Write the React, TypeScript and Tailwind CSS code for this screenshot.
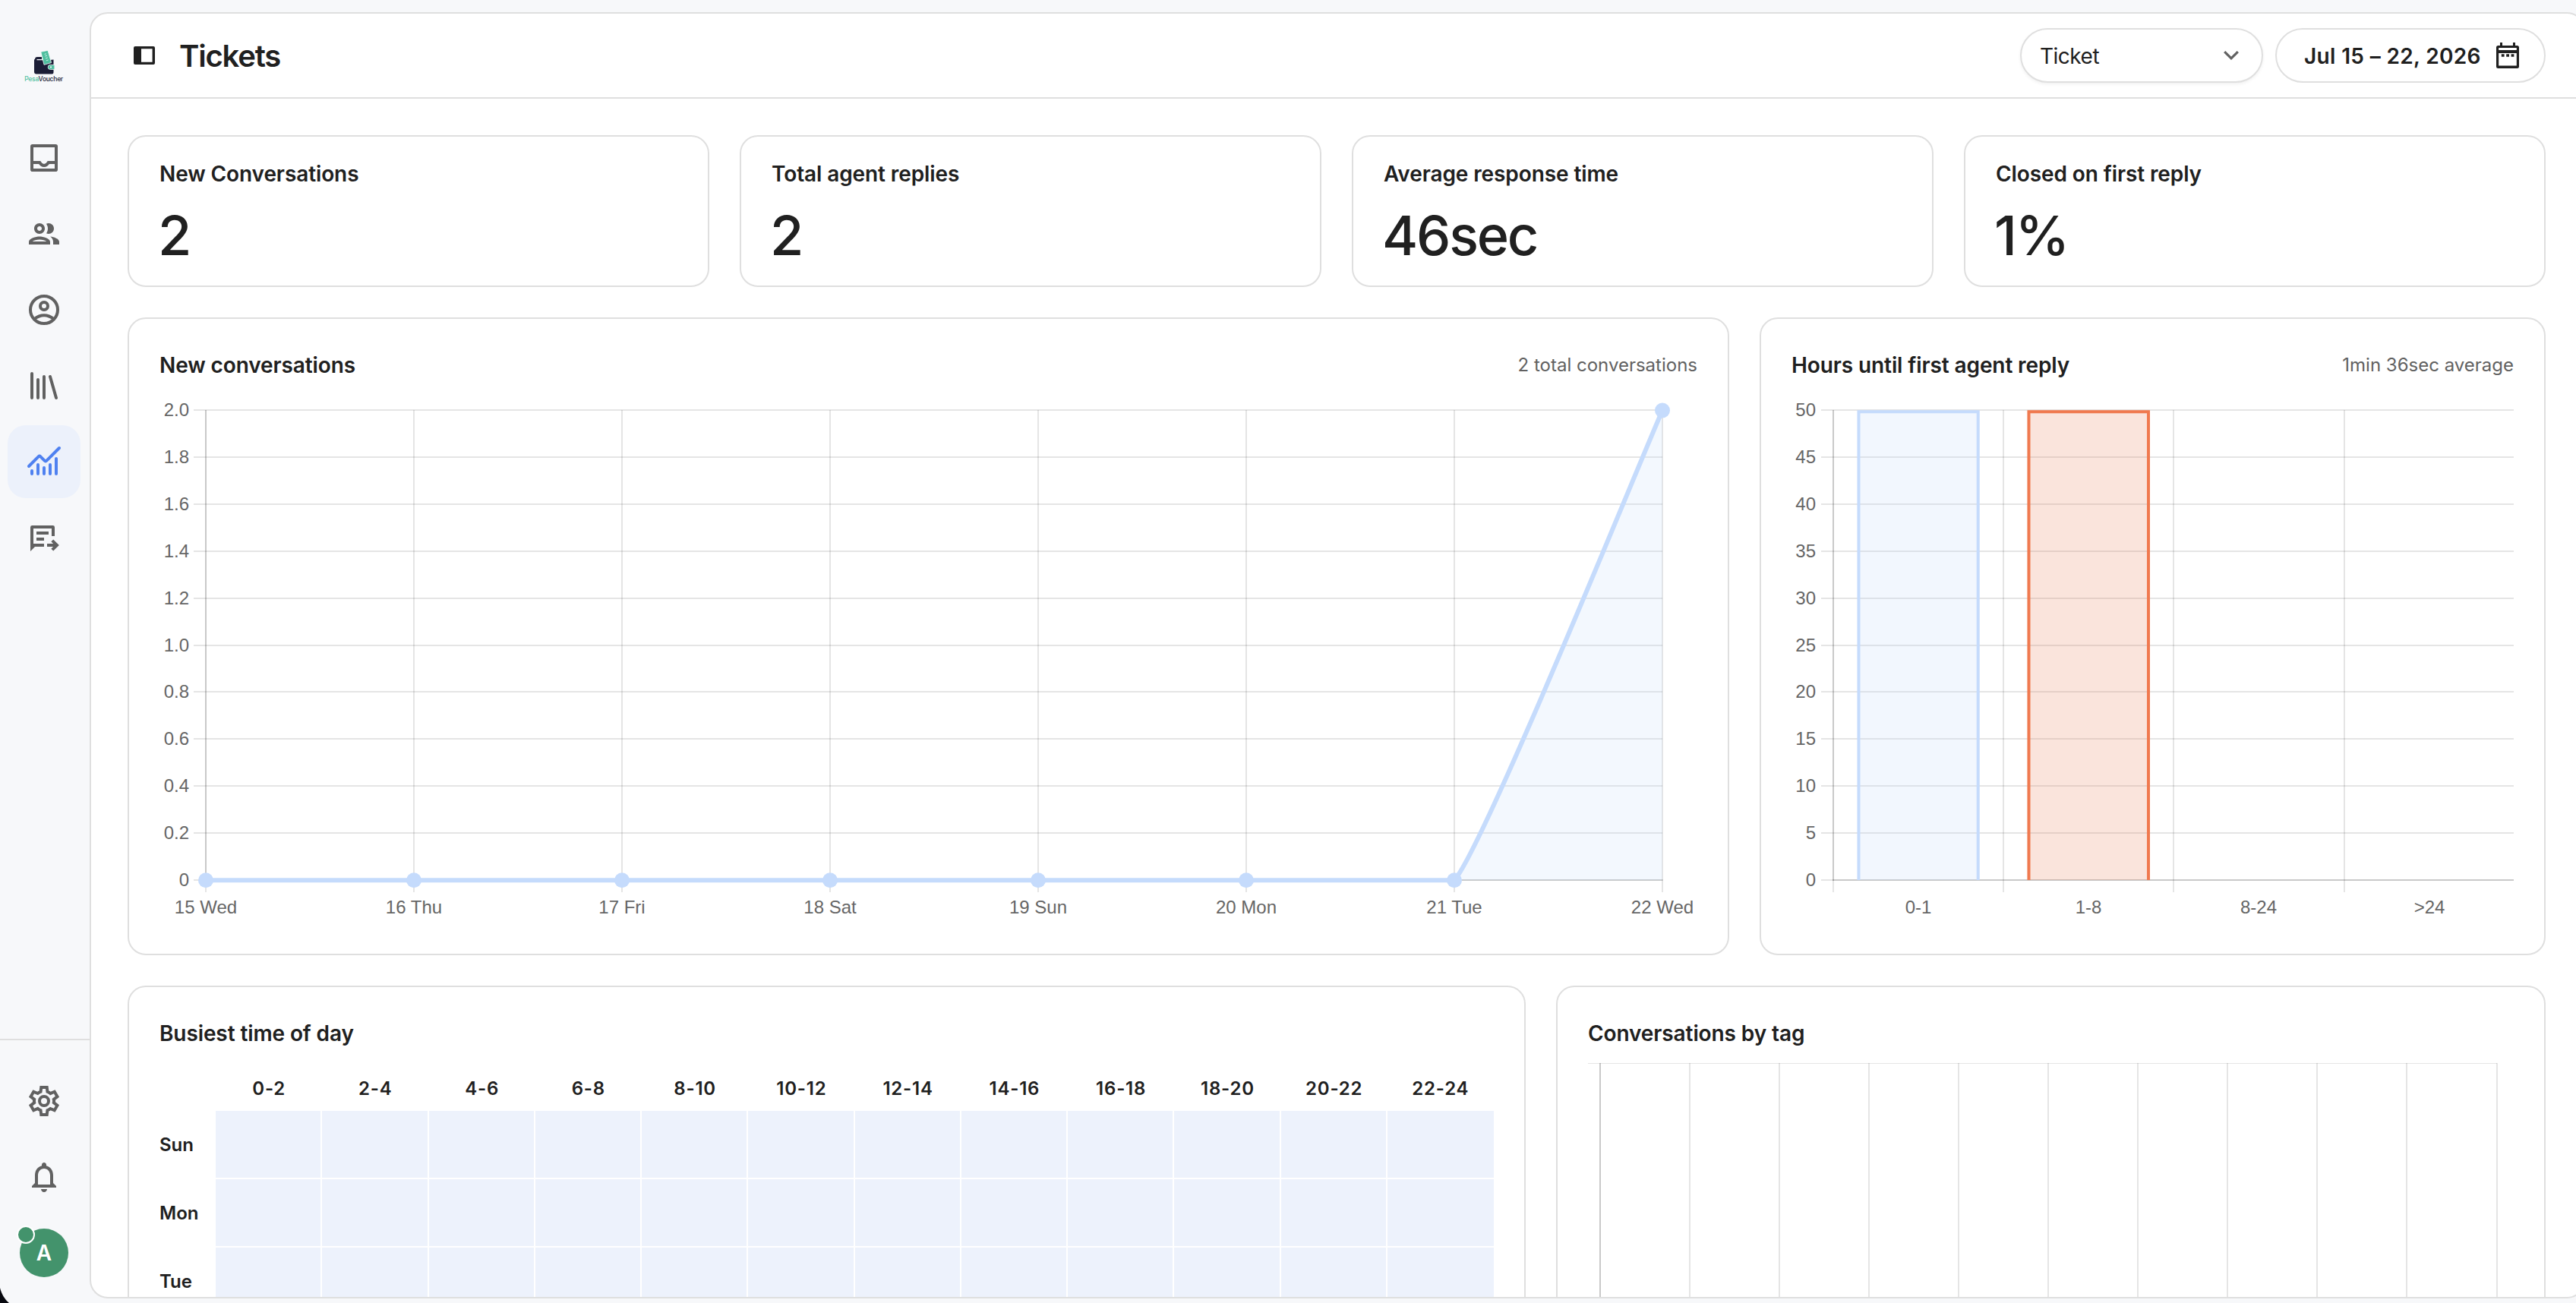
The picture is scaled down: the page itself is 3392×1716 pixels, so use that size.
import React from "react";

const INK = "#202020";
const GRID = "rgba(0,0,0,0.1)";
const AXIS = "rgba(0,0,0,0.12)";
const LABEL = "#666666";

const gridY = [540, 602, 664, 726, 788, 850, 911, 973, 1035, 1097, 1159];

function Icon({ children, className = "" }: { children: React.ReactNode; className?: string }) {
  return (
    <svg
      viewBox="0 0 24 24"
      className={`size-12 ${className}`}
      fill="none"
      stroke="currentColor"
      strokeWidth={2}
    >
      {children}
    </svg>
  );
}

function NavButton({ active = false, children }: { active?: boolean; children: React.ReactNode }) {
  return (
    <button
      className={
        active
          ? "flex size-24 items-center justify-center rounded-3xl bg-[#ecf1fb] text-[#4f81f0]"
          : "flex size-24 items-center justify-center rounded-3xl text-[#616161]"
      }
    >
      {children}
    </button>
  );
}

function Logo() {
  return (
    <svg viewBox="0 0 60 48" className="h-12 w-[60px]">
      <path
        d="M18 14.2Q18 11 21.2 11H27V14H20.5V15.2H36L42.5 14.5V31.5Q42.5 33.5 40.5 33.5H20Q17 33.5 17 30.5V14.2Z"
        fill="#1b1d36"
      />
      <path d="M25.8 4.3L35 2.4L39.6 18.6L30 21.3Z" fill="#4fbf9f" stroke="#f7f8fb" strokeWidth="0.8" />
      <path d="M30.6 7.4L33 6.8M31.2 10L34 9.2M32 12.8L34.8 12M32.8 15.8L35.6 15" stroke="#c9eee2" strokeWidth="1" />
      <path d="M38.2 21.4H43.9V27.4H38.2A3 3 0 0 1 38.2 21.4Z" fill="#4fbf9f" stroke="#f7f8fb" strokeWidth="0.8" />
      <circle cx="39" cy="24.4" r="1.1" fill="#f7f8fb" />
      <text x="4.2" y="42.6" fontSize="8.6" fontFamily="Inter, sans-serif" textLength="51" fontWeight="500" fill="#1b1d36">
        <tspan fill="#4fbf9f">Pesa</tspan>Voucher
      </text>
    </svg>
  );
}

function Sidebar() {
  return (
    <aside className="flex w-[118px] shrink-0 flex-col justify-between text-[#616161]">
      <div className="flex flex-col items-center">
        <div className="flex h-40 items-start pt-16 pr-0.5">
          <Logo />
        </div>
        <nav className="flex flex-col gap-1 pr-0.5">
          <NavButton>
            <Icon>
              <rect x="4" y="4" width="16" height="16" rx="0.4" />
              <path d="M4 15H9.1C9.8 16.2 10.8 17 12 17S14.2 16.2 14.9 15H20" />
            </Icon>
          </NavButton>
          <NavButton>
            <Icon>
              <path
                stroke="none"
                fill="currentColor"
                d="M9 13.75c-2.34 0-7 1.17-7 3.5V19h14v-1.75c0-2.33-4.66-3.5-7-3.5zM4.34 17c.84-.58 2.87-1.25 4.66-1.25s3.82.67 4.66 1.25H4.34zM9 12c1.93 0 3.5-1.57 3.5-3.5S10.93 5 9 5 5.5 6.57 5.5 8.5 7.07 12 9 12zm0-5c.83 0 1.5.67 1.5 1.5S9.83 10 9 10s-1.5-.67-1.5-1.5S8.17 7 9 7zm7.04 6.81c1.16.84 1.96 1.96 1.96 3.44V19h4v-1.75c0-2.02-3.5-3.17-5.96-3.44zM15 12c1.93 0 3.5-1.57 3.5-3.5S16.93 5 15 5c-.54 0-1.04.13-1.5.35.63.89 1 1.98 1 3.15s-.37 2.26-1 3.15c.46.22.96.35 1.5.35z"
              />
            </Icon>
          </NavButton>
          <NavButton>
            <Icon>
              <circle cx="12" cy="12" r="9" />
              <circle cx="12" cy="9.5" r="2.5" />
              <path d="M5.6 18.1C7.3 16.7 9.4 15.6 12 15.6S16.7 16.7 18.4 18.1" />
            </Icon>
          </NavButton>
          <NavButton>
            <Icon>
              <path strokeLinecap="round" d="M4 4V20M8 8V20M12 6V20M16 6L20 20" />
            </Icon>
          </NavButton>
          <NavButton active>
            <Icon>
              <path strokeLinecap="round" d="M4 18V20M8 14V20M12 16V20M16 14V20M20 10V20" />
              <path strokeLinecap="round" strokeLinejoin="round" d="M2 15L8.3 8.7Q9 8 9.7 8.7L12.3 11.3Q13 12 13.7 11.3L22 3" />
            </Icon>
          </NavButton>
          <NavButton>
            <Icon>
              <path
                stroke="none"
                fill="currentColor"
                d="M3 21V5.2A1.2 1.2 0 0 1 4.2 4H17.8A1.2 1.2 0 0 1 19 5.2V11H17V6H5V16H12V18H6Z"
              />
              <path d="M7 9H15M7 13H12M14 17H21M17.4 13.9L20.5 17L17.4 20.1" />
            </Icon>
          </NavButton>
        </nav>
      </div>
      <div className="flex flex-col items-center border-t-2 border-[#dfdfdf] pt-8 pb-[18px]">
        <div className="flex flex-col gap-1 pr-0.5">
          <NavButton>
            <Icon>
              <svg viewBox="0 -960 960 960" width="24" height="24">
                <path
                  stroke="none"
                  fill="currentColor"
                  d="m370-80-16-128q-13-5-24.5-12T307-235l-119 50L78-375l103-78q-1-7-1-13.5v-27q0-6.5 1-13.5L78-585l110-190 119 50q11-8 23-15t24-12l16-128h220l16 128q13 5 24.5 12t22.5 15l119-50 110 190-103 78q1 7 1 13.5v27q0 6.5-2 13.5l103 78-110 190-118-50q-11 8-23 15t-24 12L590-80H370Zm70-80h79l14-106q31-8 57.5-23.5T639-327l99 41 39-68-86-65q5-14 7-29.5t2-31.5q0-16-2-31.5t-7-29.5l86-65-39-68-99 42q-22-23-48.5-38.5T533-694l-13-106h-79l-14 106q-31 8-57.5 23.5T321-633l-99-41-39 68 86 64q-5 15-7 30t-2 32q0 16 2 31t7 30l-86 65 39 68 99-42q22 23 48.5 38.5T427-266l13 106Z"
                />
              </svg>
              <circle cx="12" cy="12" r="3" />
            </Icon>
          </NavButton>
          <NavButton>
            <Icon>
              <path
                stroke="none"
                fill="currentColor"
                d="M12 22c1.1 0 2-.9 2-2h-4c0 1.1.9 2 2 2zm6-6v-5c0-3.07-1.63-5.64-4.5-6.32V4c0-.83-.67-1.5-1.5-1.5s-1.5.67-1.5 1.5v.68C7.64 5.36 6 7.92 6 11v5l-2 2v1h16v-1l-2-2zm-2 1H8v-6c0-2.48 1.51-4.5 4-4.5s4 2.02 4 4.5v6z"
              />
            </Icon>
          </NavButton>
          <div className="flex size-24 items-center justify-center">
            <div className="relative flex size-16 items-center justify-center rounded-full bg-[#43936c] text-[28px] font-semibold text-white">
              A
              <span className="absolute -top-1 -left-1 size-6 rounded-full border-2 border-white bg-[#43936c]" />
            </div>
          </div>
        </div>
      </div>
    </aside>
  );
}

function Header() {
  return (
    <header className="flex h-28 shrink-0 items-center border-b-2 border-[#dfdfdf] pr-[50px] pl-14">
      <svg viewBox="0 0 28 24" className="h-6 w-7">
        <path
          fill={INK}
          fillRule="evenodd"
          d="M2 0H26A2 2 0 0 1 28 2V22A2 2 0 0 1 26 24H2A2 2 0 0 1 0 22V2A2 2 0 0 1 2 0ZM10 3.2V20.8H24.6V3.2Z"
        />
      </svg>
      <h1 className="ml-8 pt-0.5 text-[40px] leading-none font-semibold tracking-[-1.2px]">Tickets</h1>
      <div className="ml-auto flex gap-4">
        <button className="flex h-[72px] w-80 items-center justify-between rounded-full border-2 border-[#dfdfdf] bg-white pr-[30px] pl-6 text-[28px] tracking-[-0.5px] shadow-[0_2px_4px_rgba(0,0,0,0.06)]">
          <span className="pt-px">Ticket</span>
          <svg viewBox="0 0 20 12" className="h-3 w-5" fill="none" stroke="#616161" strokeWidth="3.2">
            <path d="M1.2 1.2L10 9.8L18.8 1.2" />
          </svg>
        </button>
        <button className="flex h-[72px] w-[356px] items-center justify-between rounded-full border-2 border-[#dfdfdf] bg-white pr-[33px] pl-9 text-[28px] font-semibold tracking-[0.35px]">
          <span className="pt-px">Jul 15 – 22, 2026</span>
          <svg viewBox="0 0 30 34" className="h-[34px] w-[30px]" fill={INK}>
            <path
              fillRule="evenodd"
              d="M5 0H8V4H22V0H25V4H27.5A2.5 2.5 0 0 1 30 6.5V31.5A2.5 2.5 0 0 1 27.5 34H2.5A2.5 2.5 0 0 1 0 31.5V6.5A2.5 2.5 0 0 1 2.5 4H5ZM3.2 7V10H26.8V7ZM3.2 14V30.6H26.8V14Z"
            />
            <path d="M6.8 15.2H10.6V18.8H6.8ZM13.2 15.2H17V18.8H13.2ZM19.6 15.2H23.4V18.8H19.6Z" />
          </svg>
        </button>
      </div>
    </header>
  );
}

function Stat({ label, value }: { label: string; value: string }) {
  return (
    <div className="h-[200px] rounded-3xl border-2 border-[#dfdfdf] px-10 pt-[29px]">
      <div className="text-[28px] leading-10 font-semibold tracking-[-0.1px]">{label}</div>
      <div className="-ml-0.5 mt-[25px] text-[72px] leading-none font-medium tracking-[-2.2px]">{value}</div>
    </div>
  );
}

function CardHead({ title, note }: { title: string; note?: string }) {
  return (
    <div className="flex h-10 items-center justify-between px-10 pt-0.5">
      <h2 className="text-[28px] leading-10 font-semibold tracking-[-0.1px]">{title}</h2>
      {note && <span className="text-2xl leading-10 text-[#616161]">{note}</span>}
    </div>
  );
}

const days = ["15 Wed", "16 Thu", "17 Fri", "18 Sat", "19 Sun", "20 Mon", "21 Tue", "22 Wed"];
const lineTicks = ["2.0", "1.8", "1.6", "1.4", "1.2", "1.0", "0.8", "0.6", "0.4", "0.2", "0"];

function LineChart() {
  const curve = "M271 1159.3H1915C1954 1115 2161.6 602 2189 540.5";
  return (
    <svg viewBox="210 500 2025 716" className="mx-10 h-[716px] w-[2025px]" fontFamily="'Liberation Sans', sans-serif" fontSize="24" fill={LABEL}>
      {gridY.map((y, i) => (
        <g key={y}>
          <line x1={255} x2={2189} y1={y} y2={y} stroke={GRID} strokeWidth={2} />
          <text x={249} y={y + 8.4} textAnchor="end">{lineTicks[i]}</text>
        </g>
      ))}
      {days.map((d, i) => (
        <g key={d}>
          <line x1={271 + i * 274} x2={271 + i * 274} y1={540} y2={1175} stroke={GRID} strokeWidth={2} />
          <text x={271 + i * 274} y={1203} textAnchor="middle">{d}</text>
        </g>
      ))}
      <line x1={271} x2={271} y1={540} y2={1160} stroke={AXIS} strokeWidth={2} />
      <line x1={270} x2={2190} y1={1159} y2={1159} stroke={AXIS} strokeWidth={2} />
      <path d={`${curve}V1159.3Z`} fill="rgba(197,219,252,0.2)" />
      <path d={curve} fill="none" stroke="#c5dbfc" strokeWidth={6} strokeLinejoin="round" />
      {days.map((d, i) => (
        <circle key={d} cx={271 + i * 274} cy={i === 7 ? 540.5 : 1159.3} r={10} fill="#c5dbfc" />
      ))}
    </svg>
  );
}

const barX = [2414, 2638, 2862, 3087];
const barTicks = ["50", "45", "40", "35", "30", "25", "20", "15", "10", "5", "0"];
const barLabels = ["0-1", "1-8", "8-24", ">24"];

function BarChart() {
  return (
    <svg viewBox="2359 500 951 716" className="mx-10 h-[716px] w-[951px]" fontFamily="'Liberation Sans', sans-serif" fontSize="24" fill={LABEL}>
      {gridY.map((y, i) => (
        <g key={y}>
          <line x1={2398} x2={3310} y1={y} y2={y} stroke={GRID} strokeWidth={2} />
          <text x={2391} y={y + 8.4} textAnchor="end">{barTicks[i]}</text>
        </g>
      ))}
      {barX.map((x, i) => (
        <g key={x}>
          <line x1={x} x2={x} y1={540} y2={1175} stroke={GRID} strokeWidth={2} />
          <text x={x + 112} y={1203} textAnchor="middle">{barLabels[i]}</text>
        </g>
      ))}
      <line x1={2414} x2={2414} y1={540} y2={1160} stroke={AXIS} strokeWidth={2} />
      <line x1={2413} x2={3310} y1={1159} y2={1159} stroke={AXIS} strokeWidth={2} />
      <rect x={2445.5} y={540} width={161} height={619} fill="rgba(197,219,252,0.22)" />
      <path d="M2447.5 1159V542.3H2604.7V1159" fill="none" stroke="#c5dbfc" strokeWidth={4} />
      <rect x={2669.5} y={540} width={161} height={619} fill="rgba(230,120,80,0.2)" />
      <path d="M2671.5 1159V542.3H2829V1159" fill="none" stroke="#f0794f" strokeWidth={4} />
    </svg>
  );
}

const hours = ["0-2", "2-4", "4-6", "6-8", "8-10", "10-12", "12-14", "14-16", "16-18", "18-20", "20-22", "22-24"];
const weekdays = ["Sun", "Mon", "Tue"];

function Heatmap() {
  return (
    <div className="px-10 pt-[23px] text-2xl font-semibold">
      <div className="grid h-[60px] grid-cols-[74px_repeat(12,minmax(0,1fr))] items-center pt-0.5 text-center tracking-[0.8px]">
        <span />
        {hours.map((h) => (
          <span key={h}>{h}</span>
        ))}
      </div>
      {weekdays.map((d) => (
        <div key={d} className="grid h-[90px] grid-cols-[74px_repeat(12,minmax(0,1fr))]">
          <span className="leading-[90px]">{d}</span>
          {hours.map((h) => (
            <span key={h} className="border-r-2 border-b-2 border-white bg-[#edf2fc] last:border-r-0" />
          ))}
        </div>
      ))}
    </div>
  );
}

function TagChart() {
  return (
    <svg viewBox="2091 1400 1219 308" className="mx-10 mt-5 h-[308px] w-[1219px] shrink-0">
      <rect x={2091} y={1400} width={1197} height={1} fill={GRID} />
      {Array.from({ length: 11 }, (_, i) => (
        <rect key={i} x={Math.round(2106 + i * 118.05)} y={1400} width={2} height={308} fill={GRID} />
      ))}
      <rect x={2106} y={1400} width={2} height={308} fill={AXIS} />
    </svg>
  );
}

export default function App() {
  return (
    <div className="relative flex h-[1716px] w-[3392px] overflow-hidden bg-[#f7f8fa] font-[Inter,sans-serif] text-[#202020]">
      <Sidebar />
      <main className="mt-4 mb-1.5 flex w-[3286px] shrink-0 flex-col overflow-hidden rounded-3xl border-2 border-[#dfdfdf] bg-white">
        <Header />
        <div className="flex w-[3280px] flex-col gap-10 px-12 pt-12">
          <section className="grid w-[3184px] grid-cols-4 gap-10">
            <Stat label="New Conversations" value="2" />
            <Stat label="Total agent replies" value="2" />
            <Stat label="Average response time" value="46sec" />
            <Stat label="Closed on first reply" value="1%" />
          </section>
          <section className="flex gap-10">
            <div className="flex h-[840px] w-[2109px] shrink-0 flex-col rounded-3xl border-2 border-[#dfdfdf] pt-10">
              <CardHead title="New conversations" note="2 total conversations" />
              <LineChart />
            </div>
            <div className="flex h-[840px] w-[1035px] shrink-0 flex-col rounded-3xl border-2 border-[#dfdfdf] pt-10">
              <CardHead title="Hours until first agent reply" note="1min 36sec average" />
              <BarChart />
            </div>
          </section>
          <section className="flex gap-10">
            <div className="h-[800px] w-[1841px] shrink-0 rounded-3xl border-2 border-[#dfdfdf] pt-10">
              <CardHead title="Busiest time of day" />
              <Heatmap />
            </div>
            <div className="h-[800px] w-[1303px] shrink-0 rounded-3xl border-2 border-[#dfdfdf] pt-10">
              <CardHead title="Conversations by tag" />
              <TagChart />
            </div>
          </section>
        </div>
      </main>
      <svg viewBox="0 0 12 20" className="absolute bottom-0 left-0 h-5 w-3">
        <path d="M0 0C2 8 6 15 12 20H0Z" fill="#08090f" />
      </svg>
    </div>
  );
}
